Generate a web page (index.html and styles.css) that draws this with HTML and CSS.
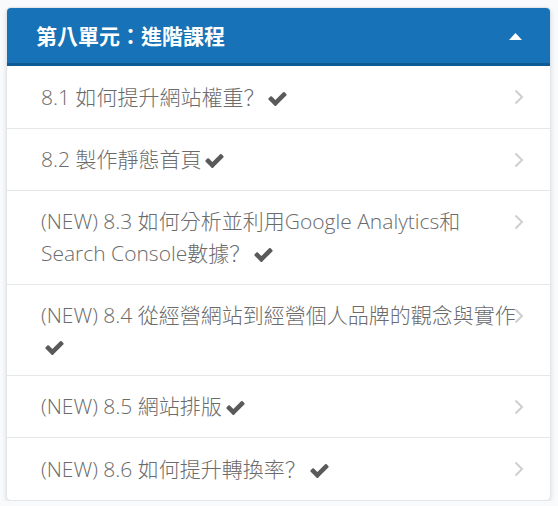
FILE: index.html
```html
<!DOCTYPE html>
<html lang="zh-Hant">
<head>
<meta charset="utf-8">
<title>第八單元：進階課程</title>
<link rel="stylesheet" href="styles.css">
</head>
<body>
<div class="card">
  <div class="card-header">
    <span class="card-title">第八單元：進階課程</span>
    <svg class="caret" width="13" height="7" viewBox="0 0 13 7"><polygon points="0,7 6.5,0 13,7" fill="#fff"/></svg>
  </div>
  <div class="lesson">
    <div class="lesson-text">8.1 如何提升網站權重<span class="q" lang="zh-Hans">？</span><svg class="check" width="19" height="14" viewBox="121 334 1550 1188"><path d="M1671 566q0 40-28 68l-724 724-136 136q-28 28-68 28t-68-28l-136-136-362-362q-28-28-28-68t28-68l136-136q28-28 68-28t68 28l294 295 656-657q28-28 68-28t68 28l136 136q28 28 28 68z"/></svg></div>
    <svg class="chev" width="10" height="16" viewBox="0 0 10 16"><polyline points="1.5,1.5 8,8 1.5,14.5" fill="none" stroke="#cfcfcf" stroke-width="2"/></svg>
  </div>
  <div class="lesson">
    <div class="lesson-text">8.2 製作靜態首頁<svg class="check" width="19" height="14" viewBox="121 334 1550 1188"><path d="M1671 566q0 40-28 68l-724 724-136 136q-28 28-68 28t-68-28l-136-136-362-362q-28-28-28-68t28-68l136-136q28-28 68-28t68 28l294 295 656-657q28-28 68-28t68 28l136 136q28 28 28 68z"/></svg></div>
    <svg class="chev" width="10" height="16" viewBox="0 0 10 16"><polyline points="1.5,1.5 8,8 1.5,14.5" fill="none" stroke="#cfcfcf" stroke-width="2"/></svg>
  </div>
  <div class="lesson">
    <div class="lesson-text">(NEW) 8.3 如何分析並利用Google Analytics和Search Console數據<span class="q" lang="zh-Hans">？</span><svg class="check" width="19" height="14" viewBox="121 334 1550 1188"><path d="M1671 566q0 40-28 68l-724 724-136 136q-28 28-68 28t-68-28l-136-136-362-362q-28-28-28-68t28-68l136-136q28-28 68-28t68 28l294 295 656-657q28-28 68-28t68 28l136 136q28 28 28 68z"/></svg></div>
    <svg class="chev" width="10" height="16" viewBox="0 0 10 16"><polyline points="1.5,1.5 8,8 1.5,14.5" fill="none" stroke="#cfcfcf" stroke-width="2"/></svg>
  </div>
  <div class="lesson">
    <div class="lesson-text">(NEW) 8.4 從經營網站到經營個人品牌的觀念與實作<svg class="check" width="19" height="14" viewBox="121 334 1550 1188"><path d="M1671 566q0 40-28 68l-724 724-136 136q-28 28-68 28t-68-28l-136-136-362-362q-28-28-28-68t28-68l136-136q28-28 68-28t68 28l294 295 656-657q28-28 68-28t68 28l136 136q28 28 28 68z"/></svg></div>
    <svg class="chev" width="10" height="16" viewBox="0 0 10 16"><polyline points="1.5,1.5 8,8 1.5,14.5" fill="none" stroke="#cfcfcf" stroke-width="2"/></svg>
  </div>
  <div class="lesson">
    <div class="lesson-text">(NEW) 8.5 網站排版<svg class="check" width="19" height="14" viewBox="121 334 1550 1188"><path d="M1671 566q0 40-28 68l-724 724-136 136q-28 28-68 28t-68-28l-136-136-362-362q-28-28-28-68t28-68l136-136q28-28 68-28t68 28l294 295 656-657q28-28 68-28t68 28l136 136q28 28 28 68z"/></svg></div>
    <svg class="chev" width="10" height="16" viewBox="0 0 10 16"><polyline points="1.5,1.5 8,8 1.5,14.5" fill="none" stroke="#cfcfcf" stroke-width="2"/></svg>
  </div>
  <div class="lesson">
    <div class="lesson-text">(NEW) 8.6 如何提升轉換率<span class="q" lang="zh-Hans">？</span><svg class="check" width="19" height="14" viewBox="121 334 1550 1188"><path d="M1671 566q0 40-28 68l-724 724-136 136q-28 28-68 28t-68-28l-136-136-362-362q-28-28-28-68t28-68l136-136q28-28 68-28t68 28l294 295 656-657q28-28 68-28t68 28l136 136q28 28 28 68z"/></svg></div>
    <svg class="chev" width="10" height="16" viewBox="0 0 10 16"><polyline points="1.5,1.5 8,8 1.5,14.5" fill="none" stroke="#cfcfcf" stroke-width="2"/></svg>
  </div>
</div>
</body>
</html>
```
FILE: styles.css
```css
html, body {
  margin: 0;
  padding: 0;
}
body {
  background: #f9fafb;
  padding: 7px 7px 0 6px;
  font-family: "Open Sans", "Noto Sans CJK TC", sans-serif;
}
.card {
  width: 545px;
  box-sizing: border-box;
  background: #fff;
  border: 1px solid #e3e5e8;
  border-radius: 5px;
  box-shadow: 0 2px 5px rgba(0, 0, 0, 0.12);
  overflow: hidden;
}
.card-header {
  display: flex;
  align-items: center;
  justify-content: space-between;
  padding: 2px 29px 0 30px;
  box-sizing: border-box;
  height: 59px;
  background: #1872b7;
  border-bottom: 3px solid #0e5a95;
  margin: -1px -1px 0 -1px;
}
.card-title {
  color: #fff;
  font-weight: 700;
  font-size: 21px;
  line-height: 30px;
}
.caret {
  display: block;
}
.lesson {
  display: flex;
  align-items: flex-start;
  padding: 15px 26px 15px 34px;
  border-bottom: 1px solid #e6e7e9;
}
.lesson:nth-child(5) {
  padding-bottom: 13px;
}
.lesson:last-child {
  border-bottom: none;
}
.lesson-text {
  flex: 1;
  min-width: 0;
  color: #6b6b6b;
  font-size: 21px;
  font-weight: 300;
  line-height: 31px;
}
.q {
  font-family: "Noto Sans CJK SC", "Noto Sans CJK TC", sans-serif;
}
.check {
  fill: #5a5a5a;
  vertical-align: -1px;
  margin-left: 4px;
}
.chev {
  flex: none;
  margin: 8px 0 0 -7px;
}
```
